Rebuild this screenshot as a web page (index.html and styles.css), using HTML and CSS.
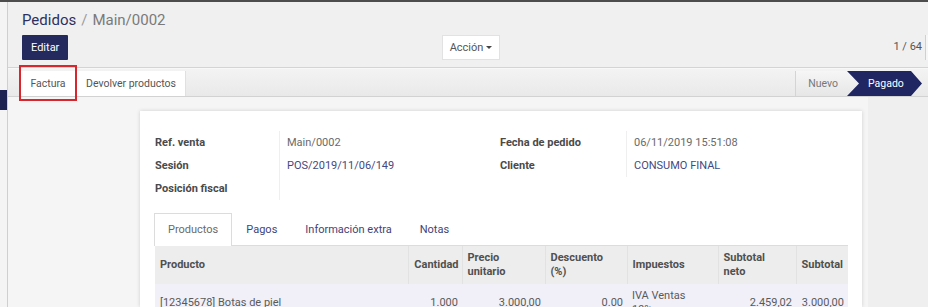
FILE: index.html
```html
<!DOCTYPE html>
<html lang="es">
<head>
<meta charset="utf-8">
<title>Pedidos / Main/0002</title>
<link rel="stylesheet" href="styles.css">
</head>
<body>
<div class="topline"></div>
<div class="app">
  <aside class="rail"><div class="rail-item"></div></aside>
  <main class="main">
    <div class="cp">
      <ol class="breadcrumb">
        <li class="crumb-link">Pedidos</li>
        <li class="crumb-sep">/</li>
        <li class="crumb-active">Main/0002</li>
      </ol>
      <div class="cp-row">
        <div class="cp-left"><button class="btn-primary">Editar</button></div>
        <div class="cp-center"><button class="btn-default">Acción <span class="caret"></span></button></div>
        <div class="cp-right"><span class="pager-value">1 / 64</span><span class="pager-btn"></span></div>
      </div>
    </div>
    <div class="statusbar">
      <div class="sb-buttons">
        <button class="sb-btn sb-highlight">Factura</button>
        <button class="sb-btn">Devolver productos</button>
      </div>
      <div class="sb-states">
        <span class="state">Nuevo</span>
        <span class="state state-current">Pagado</span>
      </div>
    </div>
    <div class="sheet-area">
      <div class="sheet">
        <div class="info">
          <div class="lbl">Ref. venta</div>
          <div class="val">Main/0002</div>
          <div class="lbl">Fecha de pedido</div>
          <div class="val">06/11/2019 15:51:08</div>
          <div class="lbl">Sesión</div>
          <div class="val link">POS/2019/11/06/149</div>
          <div class="lbl">Cliente</div>
          <div class="val link">CONSUMO FINAL</div>
          <div class="lbl">Posición fiscal</div>
          <div class="val"></div>
          <div class="lbl"></div>
          <div></div>
        </div>
        <ul class="tabs">
          <li class="tab tab-active">Productos</li>
          <li class="tab">Pagos</li>
          <li class="tab">Información extra</li>
          <li class="tab">Notas</li>
        </ul>
        <table class="lines">
          <colgroup>
            <col class="c-prod"><col class="c-qty"><col class="c-price"><col class="c-disc"><col class="c-tax"><col class="c-net"><col class="c-sub">
          </colgroup>
          <thead>
            <tr>
              <th>Producto</th>
              <th class="qty">Cantidad</th>
              <th>Precio<br>unitario</th>
              <th>Descuento<br>(%)</th>
              <th>Impuestos</th>
              <th>Subtotal<br>neto</th>
              <th>Subtotal</th>
            </tr>
          </thead>
          <tbody>
            <tr>
              <td>[12345678] Botas de piel</td>
              <td class="num">1.000</td>
              <td class="num">3.000,00</td>
              <td class="num">0.00</td>
              <td>IVA Ventas<br>19%</td>
              <td class="num">2.459,02</td>
              <td class="num">3.000,00</td>
            </tr>
          </tbody>
        </table>
      </div>
      <div class="side-panel"></div>
    </div>
  </main>
</div>
</body>
</html>
```

FILE: styles.css
```css
* { box-sizing: border-box; }

html, body {
  margin: 0;
  padding: 0;
  width: 928px;
  height: 307px;
  overflow: hidden;
  font-family: Roboto, "Liberation Sans", sans-serif;
  font-size: 11px;
  color: #4c4c4c;
  background: #f5f5f5;
}

.topline {
  height: 2px;
  background: #4d4d4d;
}

.app {
  display: flex;
  height: 305px;
}

.rail {
  width: 8px;
  flex: none;
  background: #f4f4f4;
  border-right: 1px solid #cfcfcf;
  padding-top: 88px;
}

.rail-item {
  width: 7px;
  height: 20px;
  background: #1e2252;
}

.main {
  flex: 1;
  display: flex;
  flex-direction: column;
  min-width: 0;
  overflow: hidden;
}

/* control panel */
.cp {
  flex: none;
  height: 66px;
  background: #f0f0f0;
  border-bottom: 1px solid #d4d4d4;
  padding: 9px 0 0 14px;
}

.breadcrumb {
  list-style: none;
  margin: 0;
  padding: 0;
  display: flex;
  gap: 5px;
  font-size: 15px;
  line-height: 18px;
}

.crumb-link { color: #2c3060; }
.crumb-sep { color: #9a9a9a; }
.crumb-active { color: #7a7a7a; }

.cp-row {
  margin-top: 6px;
  display: grid;
  grid-template-columns: 1fr auto 1fr;
  align-items: center;
}

.btn-primary {
  height: 25px;
  padding: 0 9px;
  border: none;
  border-radius: 1px;
  background: #252a5e;
  color: #fff;
  font: inherit;
  font-size: 11px;
}

.cp-center { margin-right: 8px; }

.btn-default {
  height: 25px;
  width: 58px;
  padding: 0;
  border: 1px solid #e2e2e2;
  background: #fff;
  color: #555;
  font: inherit;
  font-size: 11px;
  display: flex;
  align-items: center;
  justify-content: center;
  gap: 3px;
}

.caret {
  display: inline-block;
  width: 0;
  height: 0;
  border-left: 3px solid transparent;
  border-right: 3px solid transparent;
  border-top: 3px solid #444;
}

.cp-right {
  display: flex;
  justify-content: flex-end;
  align-items: center;
  gap: 3px;
}

.pager-value {
  color: #555;
  font-size: 11px;
  margin-top: -2px;
}

.pager-btn {
  width: 3px;
  height: 25px;
  border-left: 1px solid #d0d0d0;
  background: #f6f6f6;
}

/* statusbar */
.statusbar {
  flex: none;
  height: 29px;
  display: flex;
  align-items: stretch;
  padding: 2px 6px 0 12px;
  background: linear-gradient(#f3f3f3, #e9e9e9);
  border-top: 1px solid #f8f8f8;
  border-bottom: 1px solid #d2d2d2;
}

.sb-buttons { display: flex; }

.sb-btn {
  border: none;
  border-right: 1px solid #e0e0e0;
  background: #fff;
  color: #555;
  font: inherit;
  font-size: 10.5px;
  padding: 0 9px;
}

.sb-btn:first-child { width: 57px; }

.sb-highlight { position: relative; }

.sb-highlight::after {
  content: "";
  position: absolute;
  top: -6px;
  bottom: -5px;
  left: -1px;
  right: -1px;
  border: 2px solid #d8262c;
}

.sb-states {
  margin-left: auto;
  display: flex;
}

.state {
  display: flex;
  align-items: center;
  font-size: 10.5px;
  color: #777;
  padding: 0 22px 0 12px;
  background: linear-gradient(#f6f6f6, #e6e6e6);
  border-left: 1px solid #d4d4d4;
}

.state-current {
  margin-left: -13px;
  width: 75px;
  padding: 0 0 0 21px;
  border: none;
  color: #fff;
  background: #1f2662;
  clip-path: polygon(0 0, 64px 0, 75px 50%, 64px 100%, 0 100%, 12px 50%);
}

/* sheet */
.sheet-area {
  flex: 1;
  min-height: 0;
  display: flex;
  padding: 14px 0 0 132px;
  background: #f5f5f5;
}

.sheet {
  width: 722px;
  flex: none;
  background: #fff;
  box-shadow: 0 0 4px rgba(0, 0, 0, 0.16);
  padding: 20px 14px 0 15px;
}

.side-panel {
  flex: 1;
  margin-left: 6px;
  margin-top: -14px;
  background: #efefef;
}

.info {
  display: grid;
  grid-template-columns: 124px 221px 126px 1fr;
  grid-auto-rows: 23px;
  align-items: center;
}

.lbl {
  font-weight: bold;
  color: #4a4a4a;
}

.val {
  height: 100%;
  display: flex;
  align-items: center;
  padding-left: 7px;
  border-left: 1px solid #efefef;
  color: #6a6a6a;
}

.val.link { color: #45487f; }

.tabs {
  list-style: none;
  margin: 13px 0 0 -1px;
  padding: 0;
  display: flex;
  height: 33px;
  border-bottom: 1px solid #dcdcdc;
}

.tab {
  height: 33px;
  padding: 0 13px;
  border: 1px solid transparent;
  border-bottom: none;
  line-height: 31px;
  color: #3f4378;
}

.tab-active {
  border-color: #dcdcdc;
  background: #fff;
  color: #6a6a6a;
  margin-bottom: -1px;
}

.lines {
  width: 693px;
  table-layout: fixed;
  border-collapse: collapse;
}

.c-prod { width: 253px; }
.c-qty { width: 54px; }
.c-price { width: 83px; }
.c-disc { width: 82px; }
.c-tax { width: 91px; }
.c-net { width: 78px; }
.c-sub { width: 52px; }

.lines th {
  height: 38px;
  padding: 0 5px;
  background: #ededed;
  font-weight: bold;
  color: #505050;
  text-align: left;
  line-height: 14px;
  vertical-align: middle;
  border-left: 1px solid #e2e2e2;
}

.lines th:first-child,
.lines td:first-child { border-left: none; }

.lines th.qty {
  padding: 0 3px;
  text-align: right;
}

.lines td {
  padding: 5px 4px 5px 5px;
  background: #f1f0f9;
  color: #5a5a5a;
  line-height: 14px;
  vertical-align: middle;
  white-space: nowrap;
}

.lines td.num { text-align: right; }
```
